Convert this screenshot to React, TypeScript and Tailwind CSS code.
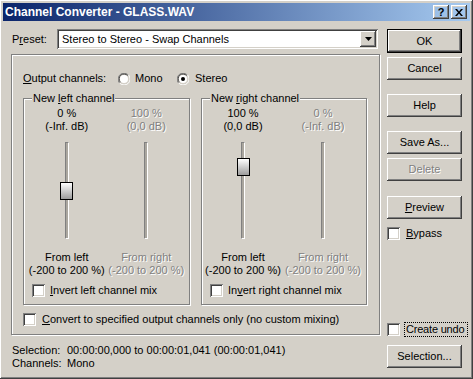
import type { ReactNode } from 'react'

const raised =
  'shadow-[inset_-1px_-1px_#404040,inset_1px_1px_#ffffff,inset_-2px_-2px_#808080,inset_2px_2px_#d4d0c8]'
const sunken =
  'shadow-[inset_1px_1px_#808080,inset_-1px_-1px_#ffffff,inset_2px_2px_#404040,inset_-2px_-2px_#d4d0c8]'
const etched = 'border border-[#808080] shadow-[1px_1px_0_#ffffff,inset_1px_1px_0_#ffffff]'
const disabled = 'text-[#808080] [text-shadow:1px_1px_0_#ffffff]'

function Button({ children, mt, isDefault, dim }: { children: ReactNode; mt: string; isDefault?: boolean; dim?: boolean }) {
  if (isDefault) {
    return (
      <div className={`${mt} h-[24px] w-[75px] border border-black`}>
        <div className={`h-full w-full flex items-center justify-center ${raised}`}>{children}</div>
      </div>
    )
  }
  return (
    <div className={`${mt} h-[23px] w-[75px] flex items-center justify-center ${raised} ${dim ? disabled : ''}`}>
      {children}
    </div>
  )
}

function Checkbox() {
  return <div className={`w-[13px] h-[13px] bg-white shrink-0 ${sunken}`} />
}

function Radio({ checked }: { checked?: boolean }) {
  return (
    <svg width="12" height="12" viewBox="0 0 12 12" className="shrink-0">
      <path d="M10.5 2.2 A5.5 5.5 0 0 0 1.5 10" fill="none" stroke="#808080" />
      <path d="M9.6 2.6 A4.5 4.5 0 0 0 2.4 9.2" fill="none" stroke="#404040" />
      <circle cx="6" cy="6" r="4" fill="#ffffff" />
      <path d="M1.8 10.2 A5.5 5.5 0 0 0 10.4 1.8" fill="none" stroke="#ffffff" />
      {checked && <circle cx="6" cy="6" r="2" fill="#000000" />}
    </svg>
  )
}

function Slider({ thumbTop }: { thumbTop: number }) {
  return (
    <div className="relative w-[13px] h-[97px] flex justify-center">
      <div className="w-[4px] h-full bg-[#aaa69e] border-l border-t border-[#808080] border-r-white border-r border-b-white border-b" />
      {thumbTop >= 0 && (
        <div
          className="absolute left-0 w-[13px] h-[18px] border border-black bg-[linear-gradient(#ffffff,#9c9c9c)]"
          style={{ top: thumbTop }}
        />
      )}
    </div>
  )
}

function Column({ top1, top2, bottom1, thumbTop, dim }: { top1: string; top2: string; bottom1: string; thumbTop: number; dim?: boolean }) {
  return (
    <div className={`flex flex-col items-center leading-[13px] ${dim ? disabled : ''}`}>
      <div>{top1}</div>
      <div>{top2}</div>
      <div className="mt-[9px]">
        <Slider thumbTop={dim ? -1 : thumbTop} />
      </div>
      <div className="mt-[12px]">{bottom1}</div>
      <div>(-200 to 200 %)</div>
    </div>
  )
}

function Group({ legend, width, cols, thumbTop, invert, pad }: {
  legend: ReactNode; width: string; cols: [string, string, string, string]; thumbTop: number; invert: ReactNode; pad: string
}) {
  return (
    <div className={`relative ${width} h-[207px] ${etched}`}>
      <span className="absolute -top-[7px] left-[8px] px-[1px] bg-[#d4d0c8] leading-[13px]">{legend}</span>
      <div className={`pt-[8px] grid grid-cols-2 ${pad}`}>
        <Column top1={cols[0]} top2={cols[1]} bottom1="From left" thumbTop={thumbTop} />
        <Column top1={cols[2]} top2={cols[3]} bottom1="From right" thumbTop={0} dim />
      </div>
      <div className="mt-[7px] pl-[8px] flex items-center gap-[5px] leading-[13px]">
        <Checkbox />
        <span>{invert}</span>
      </div>
    </div>
  )
}

export default function App() {
  return (
    <div
      className={`w-[473px] h-[379px] bg-[#d4d0c8] p-[3px] text-[11px] text-black leading-[13px] ${raised}`}
      style={{ fontFamily: '"Liberation Sans", Arial, sans-serif' }}
    >
      {/* title bar */}
      <div className="h-[18px] flex items-center bg-[linear-gradient(90deg,#0a246a,#a6caf0)] pl-[2px] pr-[3px]">
        <span className="flex-1 text-white font-bold text-[12px]">Channel Converter - GLASS.WAV</span>
        <div className={`w-[16px] h-[14px] flex items-center justify-center font-bold text-[11px] ${raised}`}>?</div>
        <div className={`ml-[2px] w-[16px] h-[14px] flex items-center justify-center ${raised}`}>
          <svg width="8" height="7" viewBox="0 0 8 7">
            <path d="M0 0h2l2 2.5L6 0h2L5 3.5 8 7H6L4 4.5 2 7H0l3-3.5z" fill="#000" />
          </svg>
        </div>
      </div>

      <div className="flex">
        {/* left column */}
        <div className="w-[381px] pl-[8px]">
          <div className="mt-[8px] h-[20px] flex items-center">
            <span className="w-[46px] pl-[1px]">
              P<u className="underline-offset-1">r</u>eset:
            </span>
            <div className={`w-[321px] h-[20px] bg-white flex items-center p-[2px] ${sunken}`}>
              <span className="flex-1 pl-[3px]">Stereo to Stereo - Swap Channels</span>
              <div className={`w-[16px] h-[16px] bg-[#d4d0c8] flex items-center justify-center ${raised}`}>
                <svg width="7" height="4" viewBox="0 0 7 4">
                  <path d="M0 0h7L3.5 4z" fill="#000" />
                </svg>
              </div>
            </div>
          </div>

          <div className={`mt-[5px] w-[369px] h-[281px] ${etched}`}>
            <div className="mt-[17px] h-[13px] pl-[11px] flex items-center">
              <span className="w-[95px]">
                <u className="underline-offset-1">O</u>utput channels:
              </span>
              <div className="w-[59px] flex items-center gap-[5px]">
                <Radio />
                <span>Mono</span>
              </div>
              <div className="flex items-center gap-[6px]">
                <Radio checked />
                <span>Stereo</span>
              </div>
            </div>

            <div className="mt-[13px] pl-[11px] flex gap-[11px]">
              <Group
                legend={<>New <u className="underline-offset-1">l</u>eft channel</>}
                width="w-[167px]"
                pad="px-[3px]"
                cols={['0 %', '(-Inf. dB)', '100 %', '(0,0 dB)']}
                thumbTop={40}
                invert={<><u className="underline-offset-1">I</u>nvert left channel mix</>}
              />
              <Group
                legend={<>New <u className="underline-offset-1">r</u>ight channel</>}
                width="w-[166px]"
                pad="pl-[1px] pr-[3px]"
                cols={['100 %', '(0,0 dB)', '0 %', '(-Inf. dB)']}
                thumbTop={16}
                invert={<>In<u className="underline-offset-1">v</u>ert right channel mix</>}
              />
            </div>

            <div className="mt-[8px] pl-[11px] flex items-center gap-[6px]">
              <Checkbox />
              <span>
                <u className="underline-offset-1">C</u>onvert to specified output channels only (no custom mixing)
              </span>
            </div>
          </div>

          <div className="mt-[9px] pl-[1px]">
            <div className="flex">
              <span className="w-[55px]">Selection:</span>
              <span>00:00:00,000 to 00:00:01,041 (00:00:01,041)</span>
            </div>
            <div className="flex">
              <span className="w-[55px]">Channels:</span>
              <span>Mono</span>
            </div>
          </div>
        </div>

        {/* right column */}
        <div className="ml-[3px] w-[75px] flex flex-col">
          <Button mt="mt-[8px]" isDefault>OK</Button>
          <Button mt="mt-[4px]">Cancel</Button>
          <Button mt="mt-[14px]">Help</Button>
          <Button mt="mt-[14px]">Save As...</Button>
          <Button mt="mt-[4px]" dim>Delete</Button>
          <Button mt="mt-[15px]">
            <span><u className="underline-offset-1">P</u>review</span>
          </Button>
          <div className="mt-[8px] flex items-center gap-[6px]">
            <Checkbox />
            <span><u className="underline-offset-1">B</u>ypass</span>
          </div>
          <div className="mt-[82px] flex items-center gap-[4px] w-[81px]">
            <Checkbox />
            <span className="flex-1 whitespace-nowrap tracking-[-0.2px] border border-dotted border-black pl-[1px] leading-[13px]">
              Create undo
            </span>
          </div>
          <Button mt="mt-[8px]">Selection...</Button>
        </div>
      </div>
    </div>
  )
}
